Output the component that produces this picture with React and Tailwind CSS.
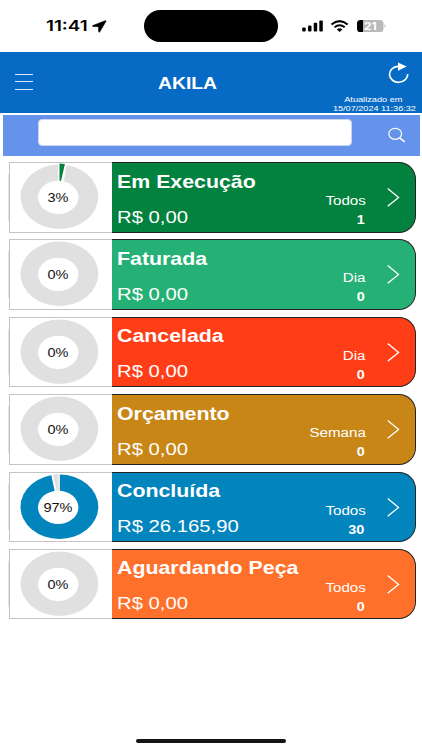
const orders = [
  { title: "Em Execução", value: "R$ 0,00", period: "Todos", count: 1, percent: 3, bg: "bg-[#02823e]", fill: "#02823e" },
  { title: "Faturada", value: "R$ 0,00", period: "Dia", count: 0, percent: 0, bg: "bg-[#25b175]", fill: "#25b175" },
  { title: "Cancelada", value: "R$ 0,00", period: "Dia", count: 0, percent: 0, bg: "bg-[#ff3e17]", fill: "#ff3e17" },
  { title: "Orçamento", value: "R$ 0,00", period: "Semana", count: 0, percent: 0, bg: "bg-[#c88617]", fill: "#c88617" },
  { title: "Concluída", value: "R$ 26.165,90", period: "Todos", count: 30, percent: 97, bg: "bg-[#0284bd]", fill: "#0284bd" },
  { title: "Aguardando Peça", value: "R$ 0,00", period: "Todos", count: 0, percent: 0, bg: "bg-[#ff702b]", fill: "#ff702b" },
];

function Donut({ percent, fill }) {
  return (
    <svg width="101" height="68" viewBox="1 0 101 68" className="block">
      <ellipse cx="50.4" cy="33.8" rx="38.9" ry="32.2" fill={percent > 50 ? fill : "#e0e0e0"} />
      {percent === 3 && (
        <>
          <path d="M49 34V0h9L52 34z" fill="#fff" />
          <path d="M50.5 19V.6q2.8 0 5.4.5L52 18z" fill={fill} />
        </>
      )}
      {percent === 97 && (
        <>
          <path d="M50.8 34V0h-8.9L49 34z" fill="#fff" />
          <path d="M49.5 19V1.1q-2.8 0-5.5.5L48 19z" fill="#e0e0e0" />
        </>
      )}
      <ellipse cx="49.2" cy="34.3" rx="20.2" ry="16.6" fill="#fff" />
      <text
        transform="translate(49 38.9) scale(1.18 1)"
        textAnchor="middle"
        fontSize="12.3"
        fill="#111"
        fontFamily="Liberation Sans, sans-serif"
      >
        {percent}%
      </text>
    </svg>
  );
}

function OrderCard({ order }) {
  return (
    <div className="flex h-[70.5px]">
      <div className="my-3 w-px bg-[#e2e2e2]" />
      <div className="w-[103px] border border-r-0 border-[#c4c4c4] bg-white">
        <Donut percent={order.percent} fill={order.fill} />
      </div>
      <div className={`flex flex-1 rounded-r-[17px] border border-l-0 border-[#222] text-white ${order.bg}`}>
        <div className="flex flex-1 flex-col pl-[5px] pt-[7.5px] whitespace-nowrap">
          <div className="h-[36px] w-0 origin-left scale-x-[1.2] text-[17.8px] leading-[22px] font-bold">{order.title}</div>
          <div className="w-0 origin-left scale-x-[1.18] text-[17.2px] leading-[21px]">{order.value}</div>
        </div>
        <div className="flex flex-col items-end pt-[29px] pr-[21.5px]">
          <div className="origin-right scale-x-[1.23] text-[12.3px] leading-[18px]">{order.period}</div>
          <div className="mr-[1px] origin-right scale-x-[1.2] text-[12px] leading-[20px] font-bold">{order.count}</div>
        </div>
        <svg width="28" height="68" viewBox="0 0 28 68" fill="none" stroke="#fff" strokeWidth="1.3">
          <path d="M.7 25.4L11.6 34.4.7 43.3" />
        </svg>
      </div>
    </div>
  );
}

function StatusBar() {
  return (
    <div className="flex h-[52px] items-center text-black">
      <div className="flex w-[144px] items-center pl-[46px]">
        <span className="w-[46px] font-['Inter'] text-[15px] leading-[18px] font-semibold">
          <span className="inline-block origin-left scale-x-[1.25]">11:41</span>
        </span>
        <svg width="15" height="13" viewBox="0 0 15 13">
          <path d="M14 1.2Q14.1.5 13.2.7L.8 5.6q-1 .6.2.9l5.5.2.2 5q.3 1.2 1.1.1z" fill="#000" stroke="#000" strokeWidth=".6" />
        </svg>
      </div>
      <div className="h-8 w-[134px] rounded-full bg-black" />
      <svg width="88" height="16" viewBox="0 0 88 16" className="ml-[23px]">
        <g fill="#000">
          <rect x="1.2" y="9.5" width="3.5" height="4" rx="1" />
          <rect x="7" y="7.4" width="3.5" height="6.1" rx="1" />
          <rect x="12.7" y="4.8" width="3.5" height="8.7" rx="1" />
          <rect x="18.3" y="2.5" width="3.5" height="11" rx="1" />
        </g>
        <g fill="none" stroke="#000" strokeWidth="2.1">
          <path d="M30.5 6.5q8.1-6.8 16.2 0" />
          <path d="M33.5 9.3q5.1-4.1 10.2 0" />
        </g>
        <path d="M35.8 11.4q2.8-2.1 5.6 0l-2.8 2.5z" fill="#000" />
        <rect x="56" y="2" width="26.5" height="12" rx="3.6" fill="#b9b9b9" />
        <path d="M62 2v12h-2.4Q56 14 56 10.4V5.6Q56 2 59.6 2z" fill="#000" />
        <path d="M83.6 6q2 2 0 4z" fill="#b9b9b9" />
        <text
          transform="translate(69.2 12.1) scale(1.14 1)"
          textAnchor="middle"
          fontSize="10.8"
          fontWeight="700"
          fill="#fff"
          fontFamily="Inter, sans-serif"
        >
          21
        </text>
      </svg>
    </div>
  );
}

function Header() {
  return (
    <header className="flex h-[60.5px] bg-[#076bc5] text-white">
      <div className="w-[158px] pt-[22px] pl-[14.5px]">
        <div className="flex w-[18.5px] flex-col gap-[6.3px]">
          <div className="h-px bg-white/85" />
          <div className="h-px bg-white/85" />
          <div className="h-px bg-white/85" />
        </div>
      </div>
      <h1 className="flex-1 pt-[20px] text-[16.4px] leading-[22px] font-bold">
        <span className="inline-block origin-left scale-x-[1.18]">AKILA</span>
      </h1>
      <div className="flex w-[94px] flex-col items-center pt-[9px] text-[8px] leading-[9px] whitespace-nowrap">
        <svg width="24" height="24" viewBox="0 0 24 24" className="mb-[10px] ml-[47px] shrink-0">
          <path d="M11 5.3A9.1 8 0 1 0 20.7 13" fill="none" stroke="#fff" strokeWidth="1.7" />
          <path d="M11 1.5L19.7 5.5 11 9.8z" fill="#fff" />
        </svg>
        <div className="mr-[4px] scale-x-[1.15]">Atualizado em</div>
        <div className="mr-[1px] scale-x-[1.14]">15/07/2024 11:36:32</div>
      </div>
    </header>
  );
}

export default function App() {
  return (
    <div className="flex h-[750px] w-[422px] flex-col overflow-hidden bg-white font-['Liberation_Sans',sans-serif]">
      <StatusBar />
      <Header />
      <div className="mt-[2px] mr-[2.5px] ml-[2.5px] flex h-[41.5px] bg-[#6593eb] pt-[4.5px] pl-[35.5px]">
        <input aria-label="Buscar" className="h-[26.5px] w-[314px] rounded-[4px] border border-[#c9d5ed] bg-white outline-none" />
        <svg width="20" height="18" viewBox="0 0 20 18" fill="none" stroke="#fff" strokeWidth="1.2" className="mt-[8px] ml-[35px]">
          <ellipse cx="8.2" cy="6.8" rx="6.4" ry="5.5" />
          <path d="M12.7 10.8l5 4" strokeWidth="1.6" />
        </svg>
      </div>
      <main className="flex flex-1 flex-col gap-[6.9px] pt-[6px] pr-[6px] pl-[7.5px]">
        {orders.map((order) => (
          <OrderCard key={order.title} order={order} />
        ))}
      </main>
      <div className="mb-[7.5px] h-[4px] w-[150px] self-center rounded-full bg-[#151515]" />
    </div>
  );
}
